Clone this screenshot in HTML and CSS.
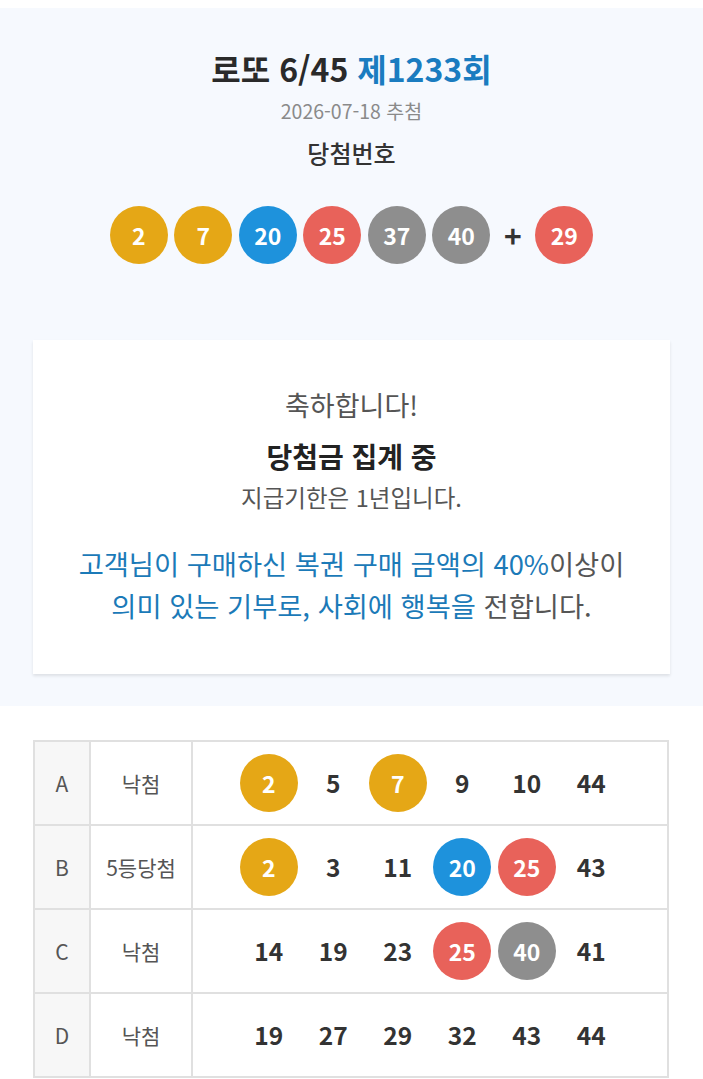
FILE: index.html
```html
<!DOCTYPE html>
<html lang="ko">
<head>
  <meta charset="UTF-8">
  <title>로또 6/45 제1233회 당첨결과</title>
  <link rel="stylesheet" href="styles.css">
</head>
<body>
  <section class="draw">
    <h1 class="draw-title">로또 6/45 <span class="round">제1233회</span></h1>
    <p class="draw-date">2026-07-18 추첨</p>
    <h2 class="draw-label">당첨번호</h2>

    <div class="balls">
      <span class="ball yellow">2</span>
      <span class="ball yellow">7</span>
      <span class="ball blue">20</span>
      <span class="ball red">25</span>
      <span class="ball gray">37</span>
      <span class="ball gray">40</span>
      <span class="plus">+</span>
      <span class="ball red">29</span>
    </div>

    <div class="result-card">
      <p class="congrats">축하합니다!</p>
      <p class="prize">당첨금 집계 중</p>
      <p class="deadline">지급기한은 1년입니다.</p>
      <p class="donation">
        <span class="hl">고객님이 구매하신 복권 구매 금액의 40%</span>이상이<br>
        <span class="hl">의미 있는 기부로, 사회에 행복을</span> 전합니다.
      </p>
    </div>
  </section>

  <table class="my-numbers">
    <tr>
      <td class="game">A</td>
      <td class="rank">낙첨</td>
      <td class="nums">
        <div class="num-row">
          <span class="ball yellow">2</span>
          <span class="num">5</span>
          <span class="ball yellow">7</span>
          <span class="num">9</span>
          <span class="num">10</span>
          <span class="num">44</span>
        </div>
      </td>
    </tr>
    <tr>
      <td class="game">B</td>
      <td class="rank">5등당첨</td>
      <td class="nums">
        <div class="num-row">
          <span class="ball yellow">2</span>
          <span class="num">3</span>
          <span class="num">11</span>
          <span class="ball blue">20</span>
          <span class="ball red">25</span>
          <span class="num">43</span>
        </div>
      </td>
    </tr>
    <tr>
      <td class="game">C</td>
      <td class="rank">낙첨</td>
      <td class="nums">
        <div class="num-row">
          <span class="num">14</span>
          <span class="num">19</span>
          <span class="num">23</span>
          <span class="ball red">25</span>
          <span class="ball gray">40</span>
          <span class="num">41</span>
        </div>
      </td>
    </tr>
    <tr>
      <td class="game">D</td>
      <td class="rank">낙첨</td>
      <td class="nums">
        <div class="num-row">
          <span class="num">19</span>
          <span class="num">27</span>
          <span class="num">29</span>
          <span class="num">32</span>
          <span class="num">43</span>
          <span class="num">44</span>
        </div>
      </td>
    </tr>
  </table>
</body>
</html>
```

FILE: styles.css
```css
body {
  margin: 0;
  font-family: "Noto Sans CJK KR", "Noto Sans", sans-serif;
  color: #333;
  background: #fff;
}
p, h1, h2 {
  margin: 0;
}

/* 회차 / 당첨번호 영역 */
.draw {
  margin-top: 8px;
  padding: 40px 0 32px;
  background-color: #f6f9fe;
  text-align: center;
}
.draw-title {
  font-size: 32px;
  line-height: 40px;
  font-weight: 700;
  color: #2a2a2a;
}
.round {
  color: #1a7cc0;
}
.draw-date {
  margin-top: 10px;
  font-size: 19.5px;
  line-height: 26px;
  color: #8a8a8a;
}
.draw-label {
  margin-top: 14px;
  font-size: 24px;
  line-height: 30px;
  font-weight: 500;
  color: #333;
}

.balls {
  display: flex;
  justify-content: center;
  align-items: center;
  gap: 6.5px;
  margin-top: 38px;
}
.ball {
  display: inline-flex;
  align-items: center;
  justify-content: center;
  width: 58px;
  height: 58px;
  border-radius: 50%;
  color: #fff;
  font-size: 23px;
  font-weight: 700;
}
.yellow { background-color: #e5a716; }
.blue { background-color: #1e92dc; }
.red { background-color: #e8625a; }
.gray { background-color: #8e8e8e; }
.plus {
  width: 32px;
  font-size: 30px;
  font-weight: 700;
  color: #333;
  text-align: center;
}

/* 당첨 결과 카드 */
.result-card {
  margin: 76px 33px 0;
  padding: 47px 0 48px;
  background: #fff;
  box-shadow: 0 2px 3px rgba(0, 0, 0, 0.1);
}
.congrats {
  font-size: 27px;
  line-height: 36px;
  color: #555;
}
.prize {
  margin-top: 15px;
  font-size: 28px;
  line-height: 36px;
  font-weight: 700;
  color: #222;
}
.deadline {
  margin-top: 8px;
  font-size: 23.5px;
  line-height: 30px;
  color: #555;
}
.donation {
  margin-top: 30px;
  font-size: 27.3px;
  line-height: 42px;
  color: #555;
}
.hl {
  color: #1b7ab8;
}

/* 구매 번호 표 */
.my-numbers {
  width: 636px;
  margin: 34px 0 0 33px;
  border-collapse: collapse;
}
.my-numbers td {
  height: 82px;
  border: 2px solid #e0e0e0;
  padding: 0;
  text-align: center;
}
.game {
  width: 54px;
  background-color: #f7f7f7;
  font-size: 21px;
  color: #555;
}
.rank {
  width: 100px;
  font-size: 21px;
  color: #555;
}
.num-row {
  display: flex;
  justify-content: center;
  gap: 6.5px;
}
.num {
  width: 58px;
  height: 58px;
  line-height: 58px;
  font-size: 24.5px;
  font-weight: 700;
  color: #333;
}
```
